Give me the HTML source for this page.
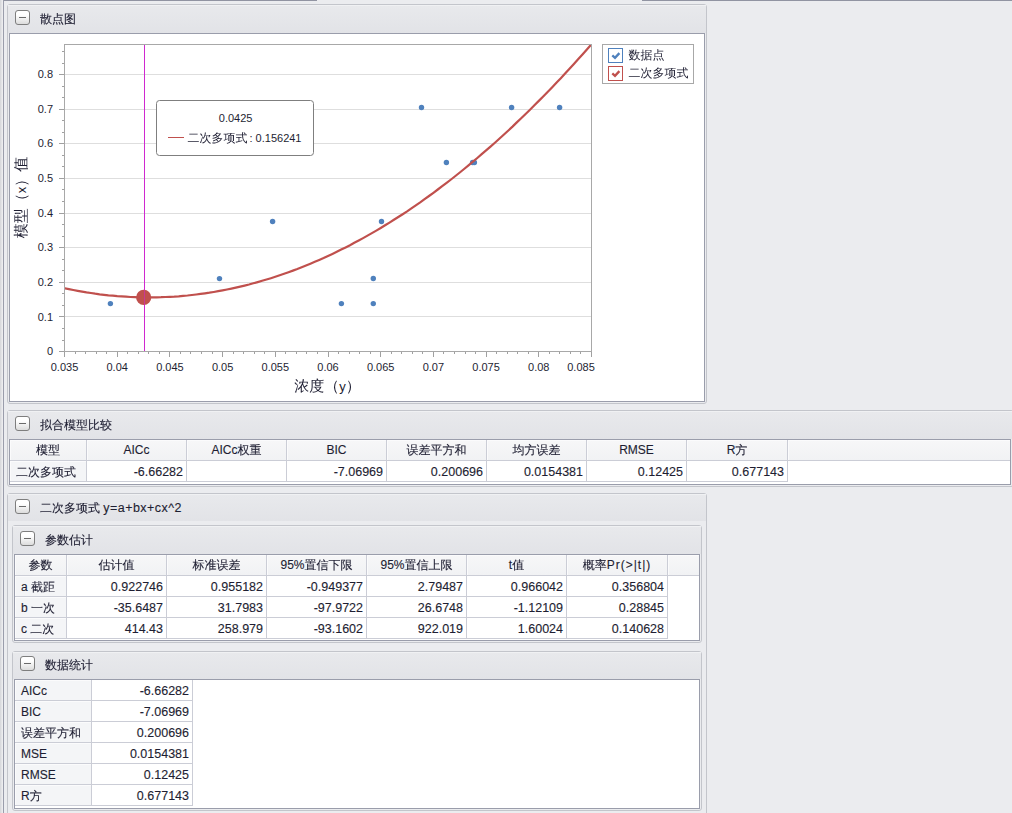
<!DOCTYPE html>
<html lang="zh-CN"><head><meta charset="utf-8"><title>拟合结果</title>
<style>
*{box-sizing:border-box;margin:0;padding:0}
html,body{width:1012px;height:813px;overflow:hidden}
body{background:#ebecef;position:relative;-webkit-text-stroke:.12px #1e1e32;font-family:"Liberation Sans","WenQuanYi Zen Hei","Noto Sans CJK SC",sans-serif;font-size:12px;color:#1e1e32}
.abs,.c,.btn,.panel,.hd,.box,.t,.vl,.hl{position:absolute}
.panel{border:1px solid #c3c5cb;border-radius:3px;background:#ebecef}
.hd{background:linear-gradient(#e8e9ec,#e2e3e7);border-top:1px solid #f0f1f3}
.box{border:1px solid #9a9dab;background:#fff;overflow:hidden}
.t{white-space:nowrap;line-height:14px;height:14px}
.btn{width:15px;height:15px;border:1px solid #7e7e7e;border-radius:3px;background:linear-gradient(#fff 30%,#dcdcdc)}
.btn i{position:absolute;left:3px;top:6px;width:7px;height:1px;background:#6a6a6a}
.c{white-space:nowrap;overflow:hidden}
.h{background:linear-gradient(#f7f7f8,#f1f2f4);text-align:center;box-shadow:inset 1px 1px 0 #fbfbfc}
.l{background:#f4f5f7;padding-left:6px;padding-top:1px;box-shadow:inset 1px 1px 0 #fbfbfc}
.n{text-align:right;padding-right:3px;padding-top:1px;font-size:12.5px}
.vl{width:1px;background:#cbcdd6}
.hl{height:1px;background:#cbcdd6}
svg.chart{position:absolute;left:0;top:0}
.ax{font-family:"Liberation Sans",sans-serif;font-size:11px;fill:#1e1e32}
.tip{font-family:"Liberation Sans","WenQuanYi Zen Hei","Noto Sans CJK SC",sans-serif;font-size:12px;fill:#1e1e32}
.ttl{font-family:"Liberation Sans","WenQuanYi Zen Hei","Noto Sans CJK SC",sans-serif;font-size:15px;fill:#1e1e32}
</style></head><body>
<div class="abs" style="left:0;top:0;width:3px;height:813px;background:linear-gradient(90deg,#d4d5d9,#f1f1f3)"></div>
<div class="abs" style="left:3px;top:0;width:1px;height:813px;background:#9a9dab"></div>
<div class="abs" style="left:4px;top:0;width:313px;height:1px;background:#9194a2"></div>
<div class="abs" style="left:642px;top:0;width:370px;height:1px;background:#9194a2"></div>
<div class="panel" style="left:7px;top:4px;width:700px;height:400px"></div>
<div class="hd" style="left:8px;top:5px;width:698px;height:28px"></div>
<div class="btn" style="left:15px;top:10px"><i></i></div>
<div class="t" style="left:40px;top:12px">散点图</div>
<div class="box" style="left:9px;top:33px;width:696px;height:369px"></div>
<div class="abs" style="left:9px;top:33px;width:696px;height:369px"><svg class="chart" width="696" height="369" viewBox="9 33 696 369">
<line x1="65" x2="591" y1="316.5" y2="316.5" stroke="#dedede" stroke-width="1"/>
<line x1="65" x2="591" y1="282.5" y2="282.5" stroke="#dedede" stroke-width="1"/>
<line x1="65" x2="591" y1="247.5" y2="247.5" stroke="#dedede" stroke-width="1"/>
<line x1="65" x2="591" y1="213.5" y2="213.5" stroke="#dedede" stroke-width="1"/>
<line x1="65" x2="591" y1="178.5" y2="178.5" stroke="#dedede" stroke-width="1"/>
<line x1="65" x2="591" y1="143.5" y2="143.5" stroke="#dedede" stroke-width="1"/>
<line x1="65" x2="591" y1="109.5" y2="109.5" stroke="#dedede" stroke-width="1"/>
<line x1="65" x2="591" y1="74.5" y2="74.5" stroke="#dedede" stroke-width="1"/>
<rect x="64.5" y="44.5" width="527" height="307" fill="none" stroke="#a8a8a8" stroke-width="1"/>
<path d="M59 351.5H64 M62 340.5H64 M62 328.5H64 M59 316.5H64 M62 305.5H64 M62 293.5H64 M59 282.5H64 M62 270.5H64 M62 259.5H64 M59 247.5H64 M62 236.5H64 M62 224.5H64 M59 213.5H64 M62 201.5H64 M62 189.5H64 M59 178.5H64 M62 166.5H64 M62 155.5H64 M59 143.5H64 M62 132.5H64 M62 120.5H64 M59 109.5H64 M62 97.5H64 M62 86.5H64 M59 74.5H64 M62 63.5H64 M62 51.5H64 M64.5 352V357 M75.5 352V354 M85.5 352V354 M96.5 352V354 M106.5 352V354 M117.5 352V357 M127.5 352V354 M138.5 352V354 M148.5 352V354 M159.5 352V354 M169.5 352V357 M180.5 352V354 M190.5 352V354 M201.5 352V354 M212.5 352V354 M222.5 352V357 M233.5 352V354 M243.5 352V354 M254.5 352V354 M264.5 352V354 M275.5 352V357 M285.5 352V354 M296.5 352V354 M306.5 352V354 M317.5 352V354 M328.5 352V357 M338.5 352V354 M349.5 352V354 M359.5 352V354 M370.5 352V354 M380.5 352V357 M391.5 352V354 M401.5 352V354 M412.5 352V354 M422.5 352V354 M433.5 352V357 M443.5 352V354 M454.5 352V354 M465.5 352V354 M475.5 352V354 M486.5 352V357 M496.5 352V354 M507.5 352V354 M517.5 352V354 M528.5 352V354 M538.5 352V357 M549.5 352V354 M559.5 352V354 M570.5 352V354 M580.5 352V354 M591.5 352V357" stroke="#a0a0a0" stroke-width="1" fill="none"/>
<g class="ax" text-anchor="end">
<text x="53" y="355.1">0</text>
<text x="53" y="320.5">0.1</text>
<text x="53" y="285.8">0.2</text>
<text x="53" y="251.2">0.3</text>
<text x="53" y="216.5">0.4</text>
<text x="53" y="181.8">0.5</text>
<text x="53" y="147.2">0.6</text>
<text x="53" y="112.6">0.7</text>
<text x="53" y="77.9">0.8</text>
</g>
<g class="ax" text-anchor="middle">
<text x="64.5" y="371">0.035</text>
<text x="117.2" y="371">0.04</text>
<text x="169.9" y="371">0.045</text>
<text x="222.6" y="371">0.05</text>
<text x="275.3" y="371">0.055</text>
<text x="328.0" y="371">0.06</text>
<text x="380.7" y="371">0.065</text>
<text x="433.4" y="371">0.07</text>
<text x="486.1" y="371">0.075</text>
<text x="538.8" y="371">0.08</text>
<text x="581.0" y="371">0.085</text>
</g>
<text class="ttl" x="327.5" y="390.5" text-anchor="middle">浓度（<tspan font-size="13">y</tspan>）</text>
<text class="ttl" transform="translate(26 197.5) rotate(-90)" text-anchor="middle">模型（<tspan font-size="13">x</tspan>）值</text>
<clipPath id="pc"><rect x="65" y="45" width="526" height="306"/></clipPath>
<g fill="#4f81bd">
<circle cx="110.4" cy="303.6" r="2.7"/>
<circle cx="219.5" cy="278.6" r="2.7"/>
<circle cx="272.6" cy="221.5" r="2.7"/>
<circle cx="341.4" cy="303.6" r="2.7"/>
<circle cx="373.3" cy="303.6" r="2.7"/>
<circle cx="373.3" cy="278.5" r="2.7"/>
<circle cx="381.5" cy="221.5" r="2.7"/>
<circle cx="421.5" cy="107.5" r="2.7"/>
<circle cx="446.4" cy="162.5" r="2.7"/>
<circle cx="472.6" cy="162.5" r="2.7"/>
<circle cx="474.4" cy="162.5" r="2.7"/>
<circle cx="511.6" cy="107.5" r="2.7"/>
<circle cx="559.6" cy="107.5" r="2.7"/>
</g>
<path clip-path="url(#pc)" d="M64.5 288.2L68.9 289.1L73.3 290.0L77.7 290.8L82.1 291.6L86.5 292.4L90.9 293.0L95.2 293.7L99.6 294.3L104.0 294.8L108.4 295.3L112.8 295.7L117.2 296.1L121.6 296.4L126.0 296.7L130.4 297.0L134.8 297.1L139.2 297.3L143.6 297.4L147.9 297.4L152.3 297.4L156.7 297.3L161.1 297.2L165.5 297.0L169.9 296.8L174.3 296.6L178.7 296.3L183.1 295.9L187.5 295.5L191.9 295.0L196.2 294.5L200.6 293.9L205.0 293.3L209.4 292.7L213.8 292.0L218.2 291.2L222.6 290.4L227.0 289.5L231.4 288.6L235.8 287.6L240.2 286.6L244.6 285.6L249.0 284.5L253.3 283.3L257.7 282.1L262.1 280.8L266.5 279.5L270.9 278.2L275.3 276.8L279.7 275.3L284.1 273.8L288.5 272.2L292.9 270.6L297.3 269.0L301.7 267.2L306.0 265.5L310.4 263.7L314.8 261.8L319.2 259.9L323.6 258.0L328.0 255.9L332.4 253.9L336.8 251.8L341.2 249.6L345.6 247.4L350.0 245.2L354.3 242.8L358.7 240.5L363.1 238.1L367.5 235.6L371.9 233.1L376.3 230.6L380.7 228.0L385.1 225.3L389.5 222.6L393.9 219.8L398.3 217.0L402.7 214.2L407.1 211.3L411.4 208.3L415.8 205.3L420.2 202.3L424.6 199.1L429.0 196.0L433.4 192.8L437.8 189.5L442.2 186.2L446.6 182.9L451.0 179.5L455.4 176.0L459.8 172.5L464.1 169.0L468.5 165.4L472.9 161.7L477.3 158.0L481.7 154.2L486.1 150.4L490.5 146.6L494.9 142.7L499.3 138.7L503.7 134.7L508.1 130.7L512.5 126.6L516.8 122.4L521.2 118.2L525.6 114.0L530.0 109.7L534.4 105.3L538.8 100.9L543.2 96.5L547.6 92.0L552.0 87.4L556.4 82.8L560.8 78.2L565.1 73.5L569.5 68.7L573.9 63.9L578.3 59.1L582.7 54.2L587.1 49.2L591.5 44.2" stroke="#c0504d" stroke-width="2.2" fill="none"/>
<line x1="144.5" x2="144.5" y1="45" y2="351" stroke="#d028d0" stroke-width="1"/>
<circle cx="143.7" cy="297.4" r="7.6" fill="#c0504d"/>
<line x1="144.5" x2="144.5" y1="290" y2="305" stroke="#d028d0" stroke-width="1" opacity=".55"/>
<rect x="156.5" y="100.5" width="157" height="55" rx="3" fill="#fff" stroke="#7f7f7f"/>
<text class="ax" x="235.6" y="122" text-anchor="middle">0.0425</text>
<line x1="168" x2="184" y1="137.5" y2="137.5" stroke="#c0504d"/>
<text class="tip" x="187.5" y="142">二次多项式<tspan class="ax" dx="2">: 0.156241</tspan></text>
<rect x="602.5" y="44.5" width="91" height="39" fill="#fff" stroke="#a8a8a8"/>
<rect x="608.5" y="48.5" width="14" height="14" fill="#fff" stroke="#4f81bd"/>
<path d="M612.3 55.4L615 57.9L619.4 53.1" stroke="#4f81bd" stroke-width="2.3" fill="none"/>
<rect x="608.5" y="66.5" width="14" height="14" fill="#fff" stroke="#c0504d"/>
<path d="M612.3 73.4L615 75.9L619.4 71.1" stroke="#c0504d" stroke-width="2.3" fill="none"/>
<text class="tip" x="628.5" y="59.3">数据点</text>
<text class="tip" x="628.5" y="77.3">二次多项式</text>
</svg></div>
<div class="panel" style="left:7px;top:410px;width:1007px;height:77px"></div>
<div class="hd" style="left:8px;top:411px;width:1004px;height:28px"></div>
<div class="btn" style="left:15px;top:416px"><i></i></div>
<div class="t" style="left:40px;top:418px">拟合模型比较</div>
<div class="box" style="left:9px;top:439px;width:1002px;height:46px"></div>
<div class="c h" style="left:10px;top:440px;width:76px;height:20px;line-height:20px">模型</div><div class="c h" style="left:87px;top:440px;width:99px;height:20px;line-height:20px">AICc</div><div class="c h" style="left:187px;top:440px;width:99px;height:20px;line-height:20px">AICc权重</div><div class="c h" style="left:287px;top:440px;width:99px;height:20px;line-height:20px">BIC</div><div class="c h" style="left:387px;top:440px;width:99px;height:20px;line-height:20px">误差平方和</div><div class="c h" style="left:487px;top:440px;width:99px;height:20px;line-height:20px">均方误差</div><div class="c h" style="left:587px;top:440px;width:99px;height:20px;line-height:20px">RMSE</div><div class="c h" style="left:687px;top:440px;width:100px;height:20px;line-height:20px">R方</div><div class="c h" style="left:788px;top:440px;width:222px;height:20px;line-height:20px"></div>
<div class="c l" style="left:10px;top:461px;width:76px;height:20px;line-height:20px">二次多项式</div>
<div class="c n" style="left:87px;top:461px;width:99px;height:20px;line-height:20px">-6.66282</div><div class="c n" style="left:187px;top:461px;width:99px;height:20px;line-height:20px"></div><div class="c n" style="left:287px;top:461px;width:99px;height:20px;line-height:20px">-7.06969</div><div class="c n" style="left:387px;top:461px;width:99px;height:20px;line-height:20px">0.200696</div><div class="c n" style="left:487px;top:461px;width:99px;height:20px;line-height:20px">0.0154381</div><div class="c n" style="left:587px;top:461px;width:99px;height:20px;line-height:20px">0.12425</div><div class="c n" style="left:687px;top:461px;width:100px;height:20px;line-height:20px">0.677143</div>
<div class="hl" style="left:10px;top:460px;width:1000px"></div>
<div class="hl" style="left:10px;top:481px;width:778px"></div>
<div class="vl" style="left:86px;top:440px;height:42px"></div>
<div class="vl" style="left:186px;top:440px;height:42px"></div>
<div class="vl" style="left:286px;top:440px;height:42px"></div>
<div class="vl" style="left:386px;top:440px;height:42px"></div>
<div class="vl" style="left:486px;top:440px;height:42px"></div>
<div class="vl" style="left:586px;top:440px;height:42px"></div>
<div class="vl" style="left:686px;top:440px;height:42px"></div>
<div class="vl" style="left:787px;top:440px;height:42px"></div>
<div class="panel" style="left:7px;top:493px;width:700px;height:330px"></div>
<div class="hd" style="left:8px;top:494px;width:698px;height:27px"></div>
<div class="btn" style="left:15px;top:499px"><i></i></div>
<div class="t" style="left:40px;top:501px">二次多项式 <span style="font-size:12.5px;letter-spacing:.45px">y=a+bx+cx^2</span></div>
<div class="panel" style="left:12px;top:525px;width:690px;height:118px"></div>
<div class="hd" style="left:13px;top:526px;width:688px;height:28px"></div>
<div class="btn" style="left:20px;top:531px"><i></i></div>
<div class="t" style="left:45px;top:533px">参数估计</div>
<div class="box" style="left:14px;top:554px;width:686px;height:87px"></div>
<div class="c h" style="left:15px;top:555px;width:51px;height:20px;line-height:20px">参数</div><div class="c h" style="left:67px;top:555px;width:99px;height:20px;line-height:20px">估计值</div><div class="c h" style="left:167px;top:555px;width:99px;height:20px;line-height:20px">标准误差</div><div class="c h" style="left:267px;top:555px;width:99px;height:20px;line-height:20px">95%置信下限</div><div class="c h" style="left:367px;top:555px;width:99px;height:20px;line-height:20px">95%置信上限</div><div class="c h" style="left:467px;top:555px;width:99px;height:20px;line-height:20px">t值</div><div class="c h" style="left:567px;top:555px;width:100px;height:20px;line-height:20px">概率<span style="letter-spacing:1px">Pr(&gt;|t|)</span></div><div class="c h" style="left:668px;top:555px;width:31px;height:20px;line-height:20px"></div>
<div class="c l" style="left:15px;top:576px;width:51px;height:20px;line-height:20px">a 截距</div>
<div class="c n" style="left:67px;top:576px;width:99px;height:20px;line-height:20px">0.922746</div><div class="c n" style="left:167px;top:576px;width:99px;height:20px;line-height:20px">0.955182</div><div class="c n" style="left:267px;top:576px;width:99px;height:20px;line-height:20px">-0.949377</div><div class="c n" style="left:367px;top:576px;width:99px;height:20px;line-height:20px">2.79487</div><div class="c n" style="left:467px;top:576px;width:99px;height:20px;line-height:20px">0.966042</div><div class="c n" style="left:567px;top:576px;width:100px;height:20px;line-height:20px">0.356804</div>
<div class="c l" style="left:15px;top:597px;width:51px;height:20px;line-height:20px">b 一次</div>
<div class="c n" style="left:67px;top:597px;width:99px;height:20px;line-height:20px">-35.6487</div><div class="c n" style="left:167px;top:597px;width:99px;height:20px;line-height:20px">31.7983</div><div class="c n" style="left:267px;top:597px;width:99px;height:20px;line-height:20px">-97.9722</div><div class="c n" style="left:367px;top:597px;width:99px;height:20px;line-height:20px">26.6748</div><div class="c n" style="left:467px;top:597px;width:99px;height:20px;line-height:20px">-1.12109</div><div class="c n" style="left:567px;top:597px;width:100px;height:20px;line-height:20px">0.28845</div>
<div class="c l" style="left:15px;top:618px;width:51px;height:20px;line-height:20px">c 二次</div>
<div class="c n" style="left:67px;top:618px;width:99px;height:20px;line-height:20px">414.43</div><div class="c n" style="left:167px;top:618px;width:99px;height:20px;line-height:20px">258.979</div><div class="c n" style="left:267px;top:618px;width:99px;height:20px;line-height:20px">-93.1602</div><div class="c n" style="left:367px;top:618px;width:99px;height:20px;line-height:20px">922.019</div><div class="c n" style="left:467px;top:618px;width:99px;height:20px;line-height:20px">1.60024</div><div class="c n" style="left:567px;top:618px;width:100px;height:20px;line-height:20px">0.140628</div>
<div class="hl" style="left:15px;top:575px;width:684px"></div>
<div class="hl" style="left:15px;top:596px;width:653px"></div>
<div class="hl" style="left:15px;top:617px;width:653px"></div>
<div class="hl" style="left:15px;top:638px;width:653px"></div>
<div class="vl" style="left:66px;top:555px;height:84px"></div>
<div class="vl" style="left:166px;top:555px;height:84px"></div>
<div class="vl" style="left:266px;top:555px;height:84px"></div>
<div class="vl" style="left:366px;top:555px;height:84px"></div>
<div class="vl" style="left:466px;top:555px;height:84px"></div>
<div class="vl" style="left:566px;top:555px;height:84px"></div>
<div class="vl" style="left:667px;top:555px;height:84px"></div>
<div class="panel" style="left:12px;top:651px;width:690px;height:160px"></div>
<div class="hd" style="left:13px;top:652px;width:688px;height:27px"></div>
<div class="btn" style="left:20px;top:656px"><i></i></div>
<div class="t" style="left:45px;top:658px">数据统计</div>
<div class="box" style="left:14px;top:679px;width:686px;height:130px"></div>
<div class="c l" style="left:15px;top:680px;width:76px;height:20px;line-height:20px">AICc</div>
<div class="c n" style="left:92px;top:680px;width:100px;height:20px;line-height:20px">-6.66282</div>
<div class="hl" style="left:15px;top:700px;width:178px"></div>
<div class="c l" style="left:15px;top:701px;width:76px;height:20px;line-height:20px">BIC</div>
<div class="c n" style="left:92px;top:701px;width:100px;height:20px;line-height:20px">-7.06969</div>
<div class="hl" style="left:15px;top:721px;width:178px"></div>
<div class="c l" style="left:15px;top:722px;width:76px;height:20px;line-height:20px">误差平方和</div>
<div class="c n" style="left:92px;top:722px;width:100px;height:20px;line-height:20px">0.200696</div>
<div class="hl" style="left:15px;top:742px;width:178px"></div>
<div class="c l" style="left:15px;top:743px;width:76px;height:20px;line-height:20px">MSE</div>
<div class="c n" style="left:92px;top:743px;width:100px;height:20px;line-height:20px">0.0154381</div>
<div class="hl" style="left:15px;top:763px;width:178px"></div>
<div class="c l" style="left:15px;top:764px;width:76px;height:20px;line-height:20px">RMSE</div>
<div class="c n" style="left:92px;top:764px;width:100px;height:20px;line-height:20px">0.12425</div>
<div class="hl" style="left:15px;top:784px;width:178px"></div>
<div class="c l" style="left:15px;top:785px;width:76px;height:20px;line-height:20px">R方</div>
<div class="c n" style="left:92px;top:785px;width:100px;height:20px;line-height:20px">0.677143</div>
<div class="hl" style="left:15px;top:805px;width:178px"></div>
<div class="vl" style="left:91px;top:680px;height:126px"></div>
<div class="vl" style="left:192px;top:680px;height:126px"></div>
</body></html>
